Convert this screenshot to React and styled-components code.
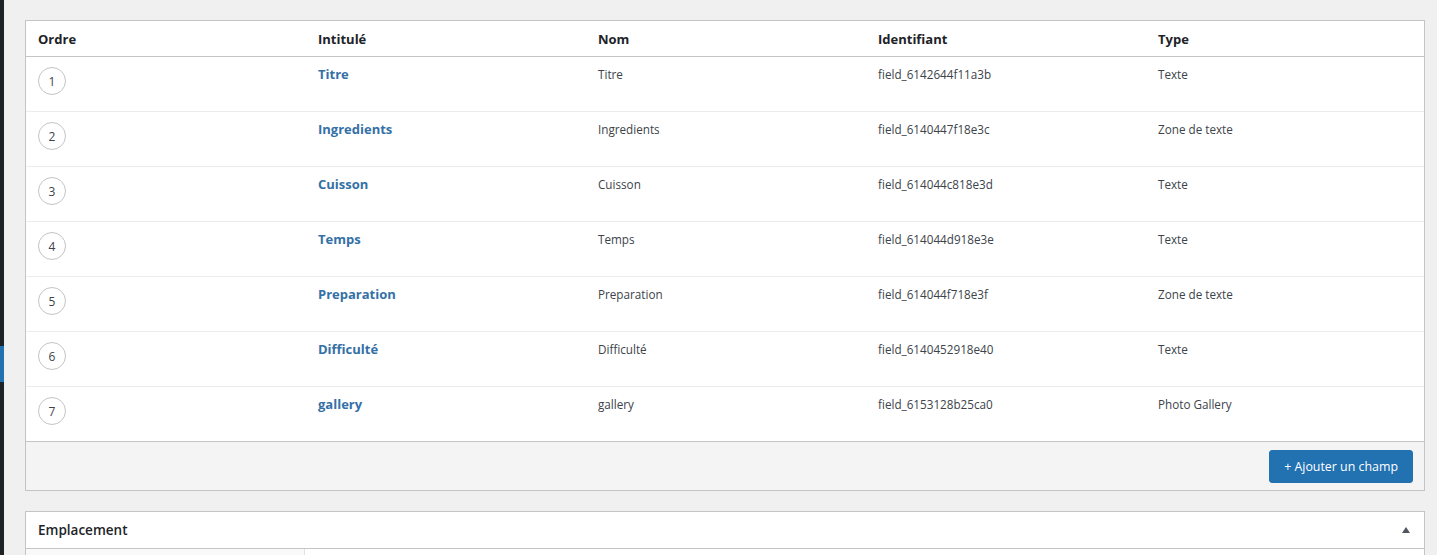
import React from "react";
import styled, { createGlobalStyle } from "styled-components";

const GlobalStyle = createGlobalStyle`
  html, body {
    margin: 0;
    padding: 0;
    background: #f0f0f1;
    font-family: "Open Sans", "Noto Sans", sans-serif;
    color: #1d2327;
    overflow: hidden;
  }
`

const fields = [
  { label: "Titre", name: "Titre", key: "field_6142644f11a3b", type: "Texte" },
  { label: "Ingredients", name: "Ingredients", key: "field_6140447f18e3c", type: "Zone de texte" },
  { label: "Cuisson", name: "Cuisson", key: "field_614044c818e3d", type: "Texte" },
  { label: "Temps", name: "Temps", key: "field_614044d918e3e", type: "Texte" },
  { label: "Preparation", name: "Preparation", key: "field_614044f718e3f", type: "Zone de texte" },
  { label: "Difficulté", name: "Difficulté", key: "field_6140452918e40", type: "Texte" },
  { label: "gallery", name: "gallery", key: "field_6153128b25ca0", type: "Photo Gallery" },
]

const Page = styled.div`
  display: flex;
  height: 555px;
  overflow: hidden;
`

const AdminEdge = styled.div`
  width: 4px;
  flex-shrink: 0;
  background: linear-gradient(
    to bottom,
    #1d2327 0,
    #1d2327 346px,
    #2271b1 346px,
    #2271b1 382px,
    #1d2327 382px
  );
`

const Content = styled.div`
  flex: 1;
  min-width: 0;
  padding: 20px 12px 0 21px;
  display: flex;
  flex-direction: column;
  gap: 20px;
`

const Panel = styled.div`
  flex-shrink: 0;
  background: #fff;
  border: 1px solid #c3c4c7;
  overflow: hidden;
`

const Grid = styled.div`
  display: grid;
  grid-template-columns: repeat(5, 280px);
`

const HeadRow = styled(Grid)`
  height: 35px;
  align-items: center;
  border-bottom: 1px solid #c3c4c7;
`

const HeadCell = styled.div`
  padding: 0 12px;
  font-size: 13px;
  font-weight: 700;
  color: #1d2327;
`

const Row = styled(Grid)`
  height: 54px;
  border-bottom: 1px solid ${p => (p.$last ? "#c3c4c7" : "#ececec")};
`

const Cell = styled.div`
  padding: ${p => (p.$order ? "10px 12px 0" : "7px 12px 0")};
  font-size: ${p => (p.$link ? "13px" : "11.7px")};
  line-height: 21px;
  font-weight: ${p => (p.$link ? 700 : 400)};
  color: ${p => (p.$link ? "#3470a6" : "#3c434a")};
`

const OrderBadge = styled.span`
  display: flex;
  align-items: center;
  justify-content: center;
  width: 26px;
  height: 26px;
  border: 1px solid #c3c4c7;
  border-radius: 50%;
  font-size: 12px;
  color: #3c434a;
`

const Footer = styled.div`
  background: #f4f4f4;
  display: flex;
  justify-content: flex-end;
  padding: 8px 11px 7px;
`

const AddButton = styled.button`
  height: 33px;
  padding: 0 14px;
  background: #2271b1;
  border: 1px solid #2271b1;
  border-radius: 3px;
  color: #fff;
  font-family: inherit;
  font-size: 12.4px;
  cursor: pointer;
`

const PanelHead = styled.div`
  height: 36px;
  display: flex;
  align-items: center;
  justify-content: space-between;
  padding: 0 12px;
  border-bottom: 1px solid #c3c4c7;
`

const PanelTitle = styled.h2`
  margin: 0;
  font-size: 13.5px;
  font-weight: 600;
  color: #1d2327;
`

const Toggle = styled.span`
  width: 0;
  height: 0;
  border-left: 4px solid transparent;
  border-right: 4px solid transparent;
  border-bottom: 6px solid #50575e;
  margin-right: 2px;
`

const RuleBody = styled.div`
  display: grid;
  grid-template-columns: 279px 1fr;
  height: 20px;
`

const RuleLabel = styled.div`
  background: #f9f9f9;
  border-right: 1px solid #e1e1e1;
`

export default function App() {
  return (
    <>
      <GlobalStyle />
      <Page>
        <AdminEdge />
        <Content>
          <Panel>
            <HeadRow>
              <HeadCell>Ordre</HeadCell>
              <HeadCell>Intitulé</HeadCell>
              <HeadCell>Nom</HeadCell>
              <HeadCell>Identifiant</HeadCell>
              <HeadCell>Type</HeadCell>
            </HeadRow>
            {fields.map((f, i) => (
              <Row key={f.key} $last={i === fields.length - 1}>
                <Cell $order>
                  <OrderBadge>{i + 1}</OrderBadge>
                </Cell>
                <Cell $link>{f.label}</Cell>
                <Cell>{f.name}</Cell>
                <Cell>{f.key}</Cell>
                <Cell>{f.type}</Cell>
              </Row>
            ))}
            <Footer>
              <AddButton>+ Ajouter un champ</AddButton>
            </Footer>
          </Panel>
          <Panel>
            <PanelHead>
              <PanelTitle>Emplacement</PanelTitle>
              <Toggle />
            </PanelHead>
            <RuleBody>
              <RuleLabel />
              <div />
            </RuleBody>
          </Panel>
        </Content>
      </Page>
    </>
  )
}
